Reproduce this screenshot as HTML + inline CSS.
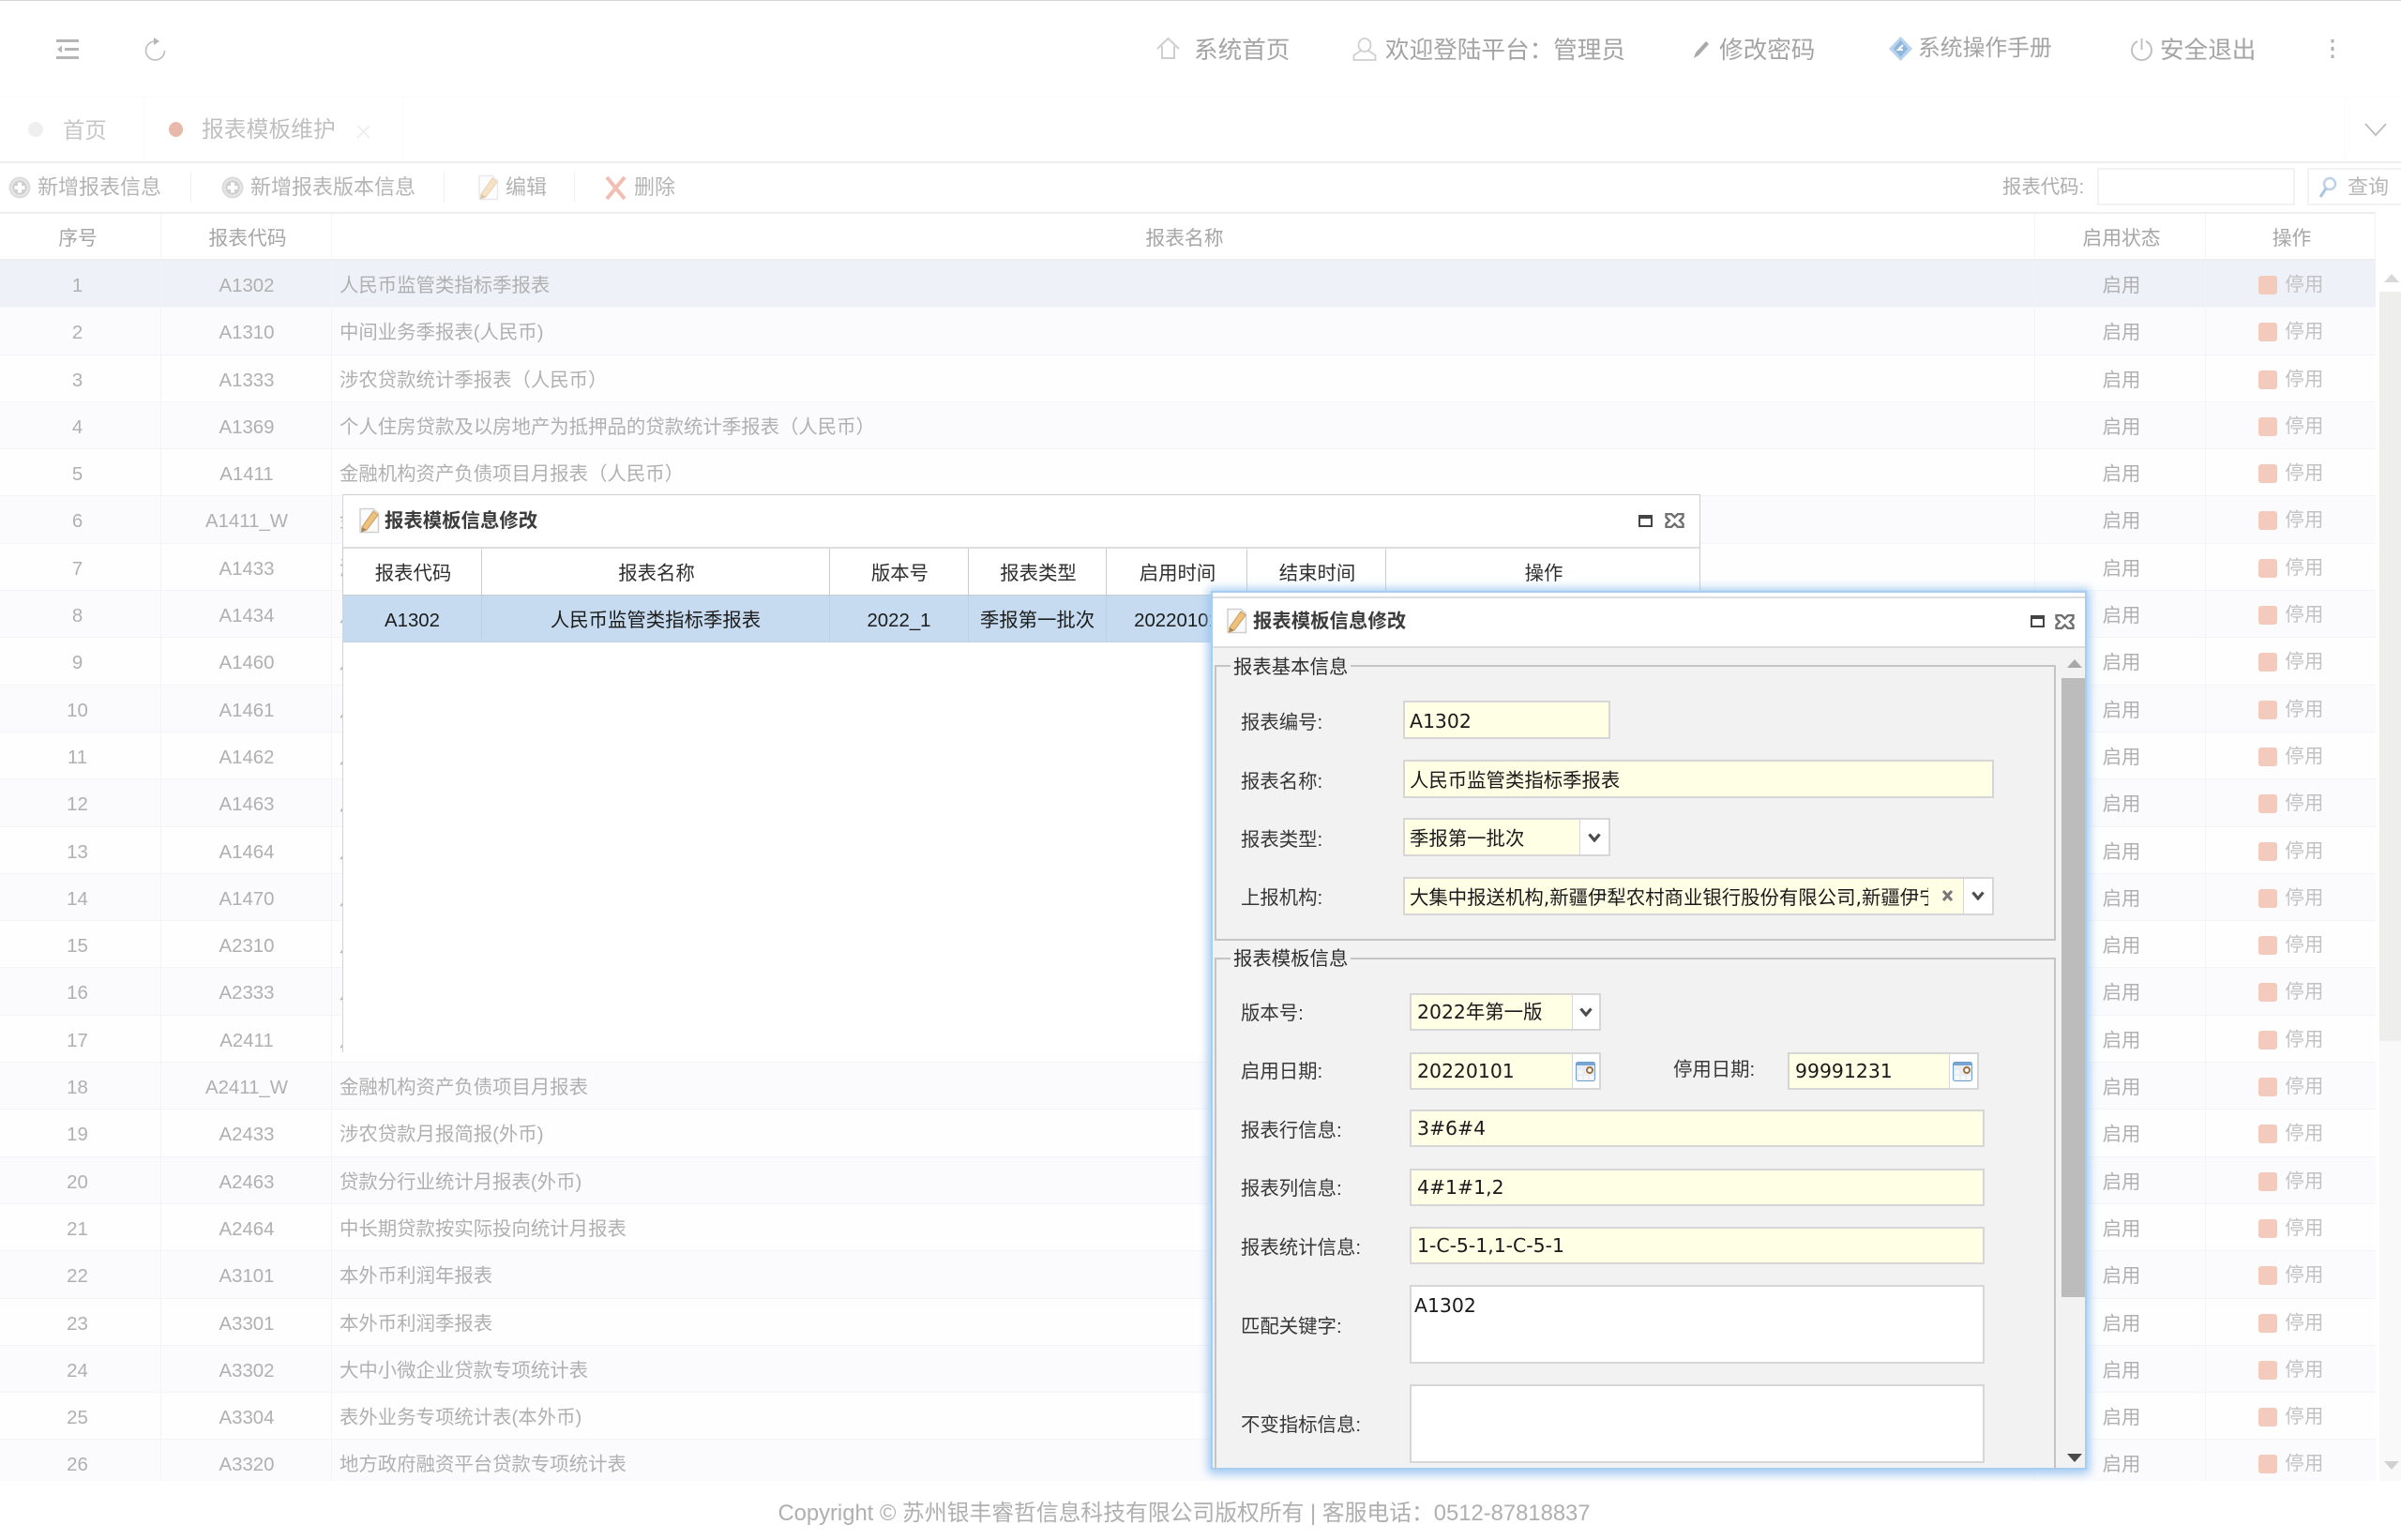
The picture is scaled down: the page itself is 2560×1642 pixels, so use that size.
<!DOCTYPE html>
<html lang="zh-CN">
<head>
<meta charset="utf-8">
<title>报表模板维护</title>
<style>
*{margin:0;padding:0;box-sizing:border-box}
html,body{width:2560px;height:1642px;overflow:hidden;background:#fff}
body{position:relative;font-family:"Liberation Sans","Noto Sans CJK SC",sans-serif;font-size:20.4px;color:#333}
.a{position:absolute}
.t{position:absolute;white-space:nowrap;height:40px;line-height:40px}
svg{position:absolute;display:block;overflow:visible}
/* nav */
.nav{color:#a4a4a4;font-size:25.6px}
.tool{color:#b4b4b4;font-size:22px}
.sep{position:absolute;top:183px;width:1px;height:33px;background:#f0f0f0}
/* main table */
#grid{position:absolute;left:0;top:226px;width:2533px;height:1353px;overflow:hidden;border-top:2px solid #eee}
.h{display:flex;height:50px;line-height:50px;color:#a6a6a6;font-size:20.8px;background:#fff;border-bottom:2px solid #eee}
.h span,.r span{display:block;text-align:center;border-right:1px solid #f4f4f4;white-space:nowrap;overflow:hidden;flex:none}
.h span{padding-top:2px;padding-left:3px}
.r{display:flex;height:50.3px;line-height:49px;color:#b0b0b0;border-bottom:1px solid #f4f4f6;background:#fefefe}
.r span{padding-top:3px}
.r:nth-child(even){background:#fbfbfd}
.r.sel,.r.sel:nth-child(odd){background:#eef2f8}
.c1{width:172px}
.h .c1{padding-left:0;padding-right:5px}
.r .c1{padding-right:6px}
.c2{width:182px}
.r .c2{padding-left:1px}
.c3{width:1816px}
.r .c3{text-align:left;padding-left:8px}
.c4{width:182px}
.r .c4{padding-left:3px}
.c5{width:181px}
.r .c5{position:relative;border-right:0;color:#c2c2c2;padding-left:29px;line-height:47px;letter-spacing:.4px}
.r .c5:before{content:"";position:absolute;left:56px;top:16px;width:20px;height:20px;border-radius:3px;background:#f3cabc}
/* dialog 1 */
#d1{position:absolute;left:365px;top:527px;width:1448px;height:595px;background:#fff;border:1px solid #ccc;border-bottom:0;border-left-color:#d4d4d4}
#d1h{position:absolute;left:365px;top:583px;width:1448px;height:52px;display:flex;border-top:2px solid #ddd;border-bottom:1px solid #ccc;border-left:1px solid #ccc;border-right:1px solid #ccc;line-height:50px;color:#2e2e2e;background:#fff}
#d1r{position:absolute;left:366px;top:635px;width:926px;height:50px;display:flex;line-height:50px;color:#1c1c1c;background:#c6dbf0;border-bottom:1px solid #c0d2e4;overflow:hidden}
#d1h span,#d1r span{display:block;flex:none;text-align:center;border-right:1px solid #ccc;white-space:nowrap;padding-top:2px}
#d1h span{padding-left:2px}
#d1r span{border-right:1px solid #bdd1e6}
.ti{font-weight:bold;color:#3c3c3c;font-size:20.4px}
/* dialog 2 */
#d2{position:absolute;left:1291px;top:630px;width:934px;height:937px;background:#f2f2f2;border:2px solid #a8cdf3;box-shadow:0 0 9px 3px rgba(150,195,240,.75),0 5px 10px rgba(150,195,240,.45)}
#d2t{position:absolute;left:1293px;top:636px;width:930px;height:55px;background:#fff;border-top:2px solid #ddd;border-bottom:2px solid #ddd}
#d2top{position:absolute;left:1293px;top:632px;width:930px;height:4px;background:#fff}
.fs{position:absolute;border:2px solid #c4c4c4}
.lg{position:absolute;background:#f2f2f2;padding:0 3px;height:30px;line-height:30px;color:#2e2e2e;white-space:nowrap;margin-top:1px}
.lb{position:absolute;height:40px;line-height:40px;color:#383838;white-space:nowrap;margin-top:1.5px}
.lb.u{margin-top:.5px}
.ip{position:absolute;background:#ffffe6;border:2px solid #d6d6d6;height:41px;line-height:40px;padding-left:5px;font-family:"DejaVu Sans","Noto Sans CJK SC",sans-serif;font-size:20.4px;color:#1a1a1a;white-space:nowrap;overflow:hidden}
.ip.s{line-height:37px;padding-left:6px}
.ip.w{background:#fff;line-height:30px;padding:5px 0 0 3px}
.bt{position:absolute;background:#fff;border-left:1px solid #d6d6d6}
</style>
</head>
<body>
<svg width="0" height="0" style="position:absolute">
<defs>
<symbol id="edit" viewBox="0 0 25 28">
<path d="M3 1.5H17L22.5 6.5V26.5H3Z" fill="#fbfbfb" stroke="#d0d0d0" stroke-width="1.5"/>
<path d="M5 21L17 4L22 8L10 24L4.5 26Z" fill="#eec27e" stroke="#c79a58" stroke-width="1"/>
<path d="M5 21L10 24L4.5 26Z" fill="#a9835a"/>
</symbol>
<symbol id="plus" viewBox="0 0 24 24">
<circle cx="12" cy="12" r="11.5" fill="#dcdcdc"/>
<circle cx="12" cy="12" r="8.5" fill="#cfcfcf" stroke="#e9e9e9" stroke-width="1.5"/>
<path d="M12 6.5V17.5M6.5 12H17.5" stroke="#fff" stroke-width="4"/>
</symbol>
<symbol id="chev" viewBox="0 0 14 10">
<path d="M1.5 1.5L7 8L12.500 1.5" fill="none" stroke="#4d4d4d" stroke-width="3.2"/>
</symbol>
<symbol id="cal" viewBox="0 0 21 21">
<rect x=".5" y=".5" width="20" height="20" rx="2" fill="#e9edf2" stroke="#6f9fcc"/>
<rect x="1" y="1" width="19" height="3" fill="#78a6d2"/>
<path d="M3 9H7V13H3ZM3 15H7V19H3ZM9 15H13V19H9ZM15 15H19V19H15Z" fill="#f8f8f8"/>
<circle cx="15" cy="9" r="3" fill="#fff" stroke="#a56f3c" stroke-width="2"/>
</symbol>
<symbol id="xb" viewBox="0 0 21 16">
<path d="M1.500 1H7L10.500 4.500L14 1H19.500V4.500L16 8L19.500 11.500V15H14L10.500 11.500L7 15H1.500V11.500L5 8L1.500 4.500Z" fill="#fff" stroke="#707070" stroke-width="2.4"/>
</symbol>
<symbol id="mn" viewBox="0 0 15 13">
<rect x="1" y="1" width="13" height="11" fill="#fff" stroke="#444" stroke-width="2"/>
<rect x="1" y="1" width="13" height="3" fill="#444"/>
</symbol>
</defs>
</svg>

<!-- top edge -->
<div class="a" style="left:0;top:0;width:2560px;height:1px;background:#d6d6d6"></div>
<div class="a" style="left:0;top:103px;width:2560px;height:1px;background:#fafafa"></div>

<!-- top left icons -->
<svg style="left:60px;top:42px" width="24" height="21" viewBox="0 0 24 21">
<path d="M0 1.5H24M9 10.5H24M0 19.5H24" stroke="#b5b5b5" stroke-width="3"/>
<path d="M1 10.500L6 6.500V14.500Z" fill="#b5b5b5"/>
</svg>
<svg style="left:154px;top:40px" width="23" height="25" viewBox="0 0 23 25">
<path d="M11.500 4A10 10 0 1 0 21.500 14" fill="none" stroke="#bdbdbd" stroke-width="1.6"/>
<path d="M10 0L16 4L10 8Z" fill="#b5b5b5"/>
</svg>

<!-- top right nav -->
<svg style="left:1233px;top:40px" width="25" height="23" viewBox="0 0 25 23">
<path d="M1 12L12.500 1L24 12M6 9V22H19V9" fill="none" stroke="#cfcfcf" stroke-width="2"/>
</svg>
<div class="t nav" style="left:1273px;top:34px">系统首页</div>
<svg style="left:1442px;top:40px" width="26" height="25" viewBox="0 0 26 25">
<ellipse cx="13" cy="8" rx="6.500" ry="7" fill="none" stroke="#cfcfcf" stroke-width="1.800"/>
<path d="M9 14L1.500 19V24H24.500V19L17 14" fill="none" stroke="#cfcfcf" stroke-width="1.800"/>
</svg>
<div class="t nav" style="left:1477px;top:34px">欢迎登陆平台：管理员</div>
<svg style="left:1805px;top:43px" width="18" height="20" viewBox="0 0 18 20">
<path d="M14 1L17 4L6 16L1 19L3 13Z" fill="#a9a9a9"/>
</svg>
<div class="t nav" style="left:1833px;top:34px">修改密码</div>
<svg style="left:2013px;top:38px" width="27" height="28" viewBox="0 0 27 28">
<path d="M13.500 1L26 14L13.500 27L1 14Z" fill="#b7d2ec"/>
<path d="M13.500 5L21 14L13.500 23L6 14Z" fill="#8db6de"/>
<path d="M16 10L11 15H16" fill="none" stroke="#fff" stroke-width="2"/>
</svg>
<div class="t nav" style="left:2045px;top:32px;font-size:23.8px">系统操作手册</div>
<svg style="left:2271px;top:40px" width="25" height="25" viewBox="0 0 25 25">
<path d="M8 4A10.500 10.500 0 1 0 17 4" fill="none" stroke="#bdbdbd" stroke-width="1.800"/>
<path d="M12.500 1V13" stroke="#bdbdbd" stroke-width="1.800"/>
</svg>
<div class="t nav" style="left:2303px;top:34px">安全退出</div>
<svg style="left:2484px;top:42px" width="6" height="20" viewBox="0 0 6 20">
<path d="M3 0V3.500M3 8V12M3 16.500V20" stroke="#b0b0b0" stroke-width="3"/>
</svg>

<!-- tabs -->
<div class="a" style="left:153px;top:104px;width:1px;height:69px;background:#fafafa"></div>
<div class="a" style="left:429px;top:104px;width:1px;height:69px;background:#fafafa"></div>
<div class="a" style="left:2499px;top:104px;width:1px;height:69px;background:#fafafa"></div>
<div class="a" style="left:30px;top:130px;width:16px;height:16px;border-radius:50%;background:#efefef"></div>
<div class="t" style="left:67px;top:119px;font-size:23.4px;color:#c6c6c6">首页</div>
<div class="a" style="left:180px;top:130px;width:15px;height:16px;border-radius:50%;background:#e8b9ab"></div>
<div class="t" style="left:215px;top:119px;font-size:23.8px;color:#c0c0c0">报表模板维护</div>
<svg style="left:380px;top:133px" width="15" height="15" viewBox="0 0 15 15">
<path d="M1 1L14 14M14 1L1 14" stroke="#ececec" stroke-width="1.600"/>
</svg>
<svg style="left:2521px;top:131px" width="24" height="14" viewBox="0 0 24 14">
<path d="M1 1L12 13L23 1" fill="none" stroke="#bcbcbc" stroke-width="1.800"/>
</svg>
<div class="a" style="left:0;top:172px;width:2560px;height:2px;background:#eee"></div>

<!-- toolbar -->
<svg style="left:9px;top:188px" width="24" height="24"><use href="#plus"/></svg>
<div class="t tool" style="left:40px;top:180px">新增报表信息</div>
<div class="sep" style="left:203px"></div>
<svg style="left:236px;top:188px" width="24" height="24"><use href="#plus"/></svg>
<div class="t tool" style="left:267px;top:180px">新增报表版本信息</div>
<div class="sep" style="left:473px"></div>
<svg style="left:508px;top:186px;opacity:.45" width="25" height="28"><use href="#edit"/></svg>
<div class="t tool" style="left:539px;top:180px">编辑</div>
<div class="sep" style="left:612px"></div>
<svg style="left:645px;top:188px" width="23" height="25" viewBox="0 0 23 25">
<path d="M2 1L21 24M21 1L2 24" stroke="#f2bdb2" stroke-width="4"/>
</svg>
<div class="t tool" style="left:676px;top:180px">删除</div>
<div class="t" style="left:2135px;top:180px;font-size:20.4px;color:#adadad">报表代码:</div>
<div class="a" style="left:2236px;top:179px;width:211px;height:40px;border:2px solid #f2f2f2;background:#fff"></div>
<div class="a" style="left:2460px;top:179px;width:110px;height:40px;border:2px solid #f2f2f2;background:#fff"></div>
<svg style="left:2472px;top:188px" width="20" height="24" viewBox="0 0 20 24">
<circle cx="12" cy="8" r="6" fill="#fff" stroke="#bcd2e8" stroke-width="2.500"/>
<path d="M8 13L2 22" stroke="#a9c6e2" stroke-width="3"/>
</svg>
<div class="t" style="left:2503px;top:180px;font-size:22px;color:#b8b8b8">查询</div>

<!-- main grid -->
<div id="grid">
<div class="h"><span class="c1">序号</span><span class="c2">报表代码</span><span class="c3">报表名称</span><span class="c4">启用状态</span><span class="c5">操作</span></div>
<div>
<div class="r sel"><span class="c1">1</span><span class="c2">A1302</span><span class="c3">人民币监管类指标季报表</span><span class="c4">启用</span><span class="c5">停用</span></div>
<div class="r"><span class="c1">2</span><span class="c2">A1310</span><span class="c3">中间业务季报表(人民币)</span><span class="c4">启用</span><span class="c5">停用</span></div>
<div class="r"><span class="c1">3</span><span class="c2">A1333</span><span class="c3">涉农贷款统计季报表（人民币）</span><span class="c4">启用</span><span class="c5">停用</span></div>
<div class="r"><span class="c1">4</span><span class="c2">A1369</span><span class="c3">个人住房贷款及以房地产为抵押品的贷款统计季报表（人民币）</span><span class="c4">启用</span><span class="c5">停用</span></div>
<div class="r"><span class="c1">5</span><span class="c2">A1411</span><span class="c3">金融机构资产负债项目月报表（人民币）</span><span class="c4">启用</span><span class="c5">停用</span></div>
<div class="r"><span class="c1">6</span><span class="c2">A1411_W</span><span class="c3">金融机构资产负债项目月报表</span><span class="c4">启用</span><span class="c5">停用</span></div>
<div class="r"><span class="c1">7</span><span class="c2">A1433</span><span class="c3">涉农贷款月报简报</span><span class="c4">启用</span><span class="c5">停用</span></div>
<div class="r"><span class="c1">8</span><span class="c2">A1434</span><span class="c3">月报表</span><span class="c4">启用</span><span class="c5">停用</span></div>
<div class="r"><span class="c1">9</span><span class="c2">A1460</span><span class="c3">月报表</span><span class="c4">启用</span><span class="c5">停用</span></div>
<div class="r"><span class="c1">10</span><span class="c2">A1461</span><span class="c3">月报表</span><span class="c4">启用</span><span class="c5">停用</span></div>
<div class="r"><span class="c1">11</span><span class="c2">A1462</span><span class="c3">月报表</span><span class="c4">启用</span><span class="c5">停用</span></div>
<div class="r"><span class="c1">12</span><span class="c2">A1463</span><span class="c3">月报表</span><span class="c4">启用</span><span class="c5">停用</span></div>
<div class="r"><span class="c1">13</span><span class="c2">A1464</span><span class="c3">月报表</span><span class="c4">启用</span><span class="c5">停用</span></div>
<div class="r"><span class="c1">14</span><span class="c2">A1470</span><span class="c3">月报表</span><span class="c4">启用</span><span class="c5">停用</span></div>
<div class="r"><span class="c1">15</span><span class="c2">A2310</span><span class="c3">月报表</span><span class="c4">启用</span><span class="c5">停用</span></div>
<div class="r"><span class="c1">16</span><span class="c2">A2333</span><span class="c3">月报表</span><span class="c4">启用</span><span class="c5">停用</span></div>
<div class="r"><span class="c1">17</span><span class="c2">A2411</span><span class="c3">月报表</span><span class="c4">启用</span><span class="c5">停用</span></div>
<div class="r"><span class="c1">18</span><span class="c2">A2411_W</span><span class="c3">金融机构资产负债项目月报表</span><span class="c4">启用</span><span class="c5">停用</span></div>
<div class="r"><span class="c1">19</span><span class="c2">A2433</span><span class="c3">涉农贷款月报简报(外币)</span><span class="c4">启用</span><span class="c5">停用</span></div>
<div class="r"><span class="c1">20</span><span class="c2">A2463</span><span class="c3">贷款分行业统计月报表(外币)</span><span class="c4">启用</span><span class="c5">停用</span></div>
<div class="r"><span class="c1">21</span><span class="c2">A2464</span><span class="c3">中长期贷款按实际投向统计月报表</span><span class="c4">启用</span><span class="c5">停用</span></div>
<div class="r"><span class="c1">22</span><span class="c2">A3101</span><span class="c3">本外币利润年报表</span><span class="c4">启用</span><span class="c5">停用</span></div>
<div class="r"><span class="c1">23</span><span class="c2">A3301</span><span class="c3">本外币利润季报表</span><span class="c4">启用</span><span class="c5">停用</span></div>
<div class="r"><span class="c1">24</span><span class="c2">A3302</span><span class="c3">大中小微企业贷款专项统计表</span><span class="c4">启用</span><span class="c5">停用</span></div>
<div class="r"><span class="c1">25</span><span class="c2">A3304</span><span class="c3">表外业务专项统计表(本外币)</span><span class="c4">启用</span><span class="c5">停用</span></div>
<div class="r"><span class="c1">26</span><span class="c2">A3320</span><span class="c3">地方政府融资平台贷款专项统计表</span><span class="c4">启用</span><span class="c5">停用</span></div>
</div>
</div>

<!-- page scrollbar -->
<div class="a" style="left:2537px;top:311px;width:23px;height:799px;background:#eeeeec"></div>
<div class="a" style="left:2537px;top:1110px;width:23px;height:469px;background:#f9f9f9"></div>
<svg style="left:2542px;top:292px" width="16" height="9" viewBox="0 0 16 9"><path d="M8 0L16 9H0Z" fill="#d8d8d8"/></svg>
<svg style="left:2542px;top:1558px" width="16" height="9" viewBox="0 0 16 9"><path d="M0 0H16L8 9Z" fill="#d0d0d0"/></svg>

<!-- dialog 1 -->
<div id="d1"></div>
<svg style="left:381px;top:541px" width="25" height="28"><use href="#edit"/></svg>
<div class="t ti" style="left:410px;top:536px">报表模板信息修改</div>
<svg style="left:1747px;top:549px" width="15" height="13"><use href="#mn"/></svg>
<svg style="left:1775px;top:547px" width="21" height="16"><use href="#xb"/></svg>
<div id="d1h">
<span style="width:148px">报表代码</span><span style="width:371px">报表名称</span><span style="width:148px">版本号</span><span style="width:147px">报表类型</span><span style="width:150px">启用时间</span><span style="width:148px">结束时间</span><span style="width:334px;border-right:0">操作</span>
</div>
<div id="d1r">
<span style="width:148px">A1302</span><span style="width:371px">人民币监管类指标季报表</span><span style="width:148px">2022_1</span><span style="width:147px">季报第一批次</span><span style="width:150px">20220101</span>
</div>

<!-- dialog 2 -->
<div id="d2"></div>
<div id="d2top"></div>
<div id="d2t"></div>
<svg style="left:1306px;top:648px" width="25" height="28"><use href="#edit"/></svg>
<div class="t ti" style="left:1336px;top:643px">报表模板信息修改</div>
<svg style="left:2165px;top:656px" width="15" height="13"><use href="#mn"/></svg>
<svg style="left:2191px;top:655px" width="21" height="16"><use href="#xb"/></svg>

<!-- d2 scrollbar -->
<div class="a" style="left:2198px;top:723px;width:25px;height:660px;background:#bcbcbc"></div>
<svg style="left:2204px;top:703px" width="16" height="9" viewBox="0 0 16 9"><path d="M8 0L16 9H0Z" fill="#a8a8a8"/></svg>
<svg style="left:2204px;top:1550px" width="16" height="9" viewBox="0 0 16 9"><path d="M0 0H16L8 9Z" fill="#4a4a4a"/></svg>

<!-- fieldset 1 -->
<div class="fs" style="left:1295px;top:709px;width:897px;height:294px"></div>
<div class="lg" style="left:1312px;top:696px">报表基本信息</div>
<div class="lb" style="left:1323px;top:749px">报表编号:</div>
<div class="ip" style="left:1496px;top:747px;width:221px">A1302</div>
<div class="lb" style="left:1323px;top:812px">报表名称:</div>
<div class="ip" style="left:1496px;top:810px;width:630px">人民币监管类指标季报表</div>
<div class="lb" style="left:1323px;top:874px">报表类型:</div>
<div class="ip" style="left:1496px;top:872px;width:221px">季报第一批次</div>
<div class="bt" style="left:1684px;top:874px;width:31px;height:37px"></div>
<svg style="left:1693px;top:888px" width="14" height="10"><use href="#chev"/></svg>
<div class="lb" style="left:1323px;top:936px">上报机构:</div>
<div class="ip" style="left:1496px;top:935px;width:630px"><div style="width:553px;overflow:hidden">大集中报送机构,新疆伊犁农村商业银行股份有限公司,新疆伊宁农村商业银行</div></div>
<svg style="left:2070px;top:948px" width="13" height="14" viewBox="0 0 13 14"><path d="M2 2L11 12M11 2L2 12" stroke="#777" stroke-width="3"/></svg>
<div class="bt" style="left:2093px;top:937px;width:31px;height:37px"></div>
<svg style="left:2102px;top:950px" width="14" height="10"><use href="#chev"/></svg>

<!-- fieldset 2 -->
<div class="fs" style="left:1295px;top:1021px;width:897px;height:546px;border-bottom:0"></div>
<div class="lg" style="left:1312px;top:1007px">报表模板信息</div>
<div class="lb u" style="left:1323px;top:1060px">版本号:</div>
<div class="ip s" style="left:1503px;top:1059px;width:204px;height:40px">2022年第一版</div>
<div class="bt" style="left:1676px;top:1061px;width:29px;height:36px"></div>
<svg style="left:1684px;top:1074px" width="14" height="10"><use href="#chev"/></svg>
<div class="lb u" style="left:1323px;top:1122px">启用日期:</div>
<div class="ip s" style="left:1503px;top:1122px;width:204px;height:40px">20220101</div>
<div class="bt" style="left:1676px;top:1124px;width:29px;height:36px"></div>
<svg style="left:1680px;top:1132px" width="21" height="21"><use href="#cal"/></svg>
<div class="lb u" style="left:1784px;top:1120px">停用日期:</div>
<div class="ip s" style="left:1906px;top:1122px;width:204px;height:40px">99991231</div>
<div class="bt" style="left:2078px;top:1124px;width:30px;height:36px"></div>
<svg style="left:2082px;top:1132px" width="21" height="21"><use href="#cal"/></svg>
<div class="lb u" style="left:1323px;top:1185px">报表行信息:</div>
<div class="ip s" style="left:1503px;top:1183px;width:613px;height:40px">3#6#4</div>
<div class="lb u" style="left:1323px;top:1247px">报表列信息:</div>
<div class="ip s" style="left:1503px;top:1246px;width:613px;height:40px">4#1#1,2</div>
<div class="lb u" style="left:1323px;top:1310px">报表统计信息:</div>
<div class="ip s" style="left:1503px;top:1308px;width:613px;height:40px">1-C-5-1,1-C-5-1</div>
<div class="lb u" style="left:1323px;top:1394px">匹配关键字:</div>
<div class="ip w" style="left:1503px;top:1370px;width:613px;height:84px">A1302</div>
<div class="lb" style="left:1323px;top:1498px">不变指标信息:</div>
<div class="ip w" style="left:1503px;top:1476px;width:613px;height:84px"></div>

<!-- footer -->
<div class="t" style="left:0;top:1594px;width:2525px;text-align:center;font-size:23.8px;color:#afafaf">Copyright © 苏州银丰睿哲信息科技有限公司版权所有 | 客服电话：0512-87818837</div>
</body>
</html>
